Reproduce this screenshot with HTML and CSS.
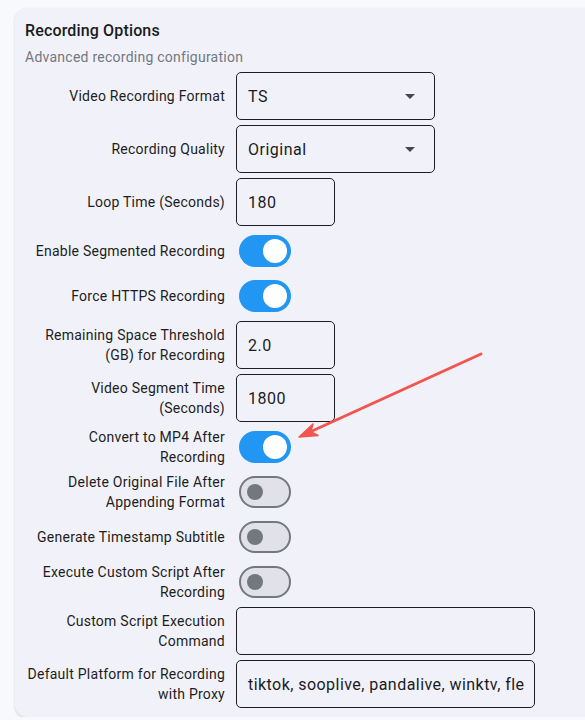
FILE: index.html
```html
<!DOCTYPE html>
<html>
<head>
<meta charset="utf-8">
<link rel="stylesheet" href="styles.css">
</head>
<body>
<div class="card">
  <div class="title">Recording Options</div>
  <div class="subtitle">Advanced recording configuration</div>

  <div class="row">
    <div class="label">Video Recording Format</div>
    <div class="field select">TS<span class="caret"></span></div>
  </div>
  <div class="row">
    <div class="label">Recording Quality</div>
    <div class="field select">Original<span class="caret"></span></div>
  </div>
  <div class="row">
    <div class="label">Loop Time (Seconds)</div>
    <div class="field short">180</div>
  </div>
  <div class="row sw-row">
    <div class="label">Enable Segmented Recording</div>
    <div class="switch on"><span class="thumb"></span></div>
  </div>
  <div class="row sw-row">
    <div class="label">Force HTTPS Recording</div>
    <div class="switch on"><span class="thumb"></span></div>
  </div>
  <div class="row">
    <div class="label">Remaining Space Threshold<br>(GB) for Recording</div>
    <div class="field short">2.0</div>
  </div>
  <div class="row">
    <div class="label">Video Segment Time<br>(Seconds)</div>
    <div class="field short">1800</div>
  </div>
  <div class="row sw-row">
    <div class="label">Convert to MP4 After<br>Recording</div>
    <div class="switch on"><span class="thumb"></span></div>
  </div>
  <div class="row sw-row">
    <div class="label">Delete Original File After<br>Appending Format</div>
    <div class="switch off"><span class="thumb"></span></div>
  </div>
  <div class="row sw-row">
    <div class="label">Generate Timestamp Subtitle</div>
    <div class="switch off"><span class="thumb"></span></div>
  </div>
  <div class="row sw-row">
    <div class="label">Execute Custom Script After<br>Recording</div>
    <div class="switch off"><span class="thumb"></span></div>
  </div>
  <div class="row">
    <div class="label">Custom Script Execution<br>Command</div>
    <div class="field wide"></div>
  </div>
  <div class="row">
    <div class="label">Default Platform for Recording<br>with Proxy</div>
    <div class="field wide"><span class="value">tiktok, sooplive, pandalive, winktv, fle</span></div>
  </div>
</div>

<svg class="arrow" width="585" height="720" viewBox="0 0 585 720" xmlns="http://www.w3.org/2000/svg">
  <line x1="481" y1="354" x2="311" y2="431.5" stroke="#f2554f" stroke-width="3" stroke-linecap="round"/>
  <polygon points="299,437 318,435.5 310.8,431.6 313,424" fill="#f2554f" stroke="#f2554f" stroke-width="1.5" stroke-linejoin="round"/>
</svg>
</body>
</html>
```

FILE: styles.css
```css
html, body {
  margin: 0;
  padding: 0;
  background: #f8f9fd;
  overflow: hidden;
  font-family: Roboto, "Noto Sans", sans-serif;
  color: #1b1b1f;
}

.card {
  margin: 8px -30px 0 15px;
  background: #f1f2f9;
  border-radius: 12px;
  box-shadow: 0 1px 3px rgba(0, 0, 0, 0.12), 0 1px 2px rgba(0, 0, 0, 0.06);
  padding: 12px 10px 9px 10px;
  display: flex;
  flex-direction: column;
  gap: 5px;
}

.title {
  font-size: 16px;
  font-weight: 500;
  line-height: 22px;
  letter-spacing: 0.15px;
  color: #1a1b20;
}

.subtitle {
  font-size: 14px;
  line-height: 20px;
  letter-spacing: 0.25px;
  color: #74777f;
}

.row {
  display: flex;
  align-items: center;
  gap: 11px;
  min-height: 48px;
}

.row.sw-row {
  min-height: 40px;
}

.label {
  width: 200px;
  flex: none;
  text-align: right;
  font-size: 14px;
  line-height: 20px;
  letter-spacing: 0.25px;
  white-space: nowrap;
  color: #1d1d22;
}

.field {
  box-sizing: border-box;
  height: 48px;
  border: 1px solid #1e1e22;
  border-radius: 5px;
  padding: 0 10px 0 11px;
  display: flex;
  align-items: center;
  font-size: 16px;
  letter-spacing: 0.5px;
  color: #1b1b1f;
  white-space: nowrap;
}

.select {
  width: 199px;
  justify-content: space-between;
  padding-right: 19px;
}

.caret {
  width: 0;
  height: 0;
  border-left: 5px solid transparent;
  border-right: 5px solid transparent;
  border-top: 5px solid #46464c;
}

.short {
  width: 99px;
}

.wide {
  width: 299px;
  padding-right: 2px;
}

.value {
  letter-spacing: 0.45px;
}

.switch {
  box-sizing: border-box;
  width: 52px;
  height: 32px;
  border-radius: 16px;
  margin-left: 3px;
  display: flex;
  align-items: center;
}

.switch.on {
  background: #2196f3;
  justify-content: flex-end;
  padding-right: 4px;
}

.switch.on .thumb {
  width: 24px;
  height: 24px;
  border-radius: 50%;
  background: #ffffff;
}

.switch.off {
  background: #e1e2e9;
  border: 2px solid #73777f;
  padding-left: 6px;
}

.switch.off .thumb {
  width: 16px;
  height: 16px;
  border-radius: 50%;
  background: #73777f;
}

.arrow {
  position: absolute;
  left: 0;
  top: 0;
  pointer-events: none;
}
```
